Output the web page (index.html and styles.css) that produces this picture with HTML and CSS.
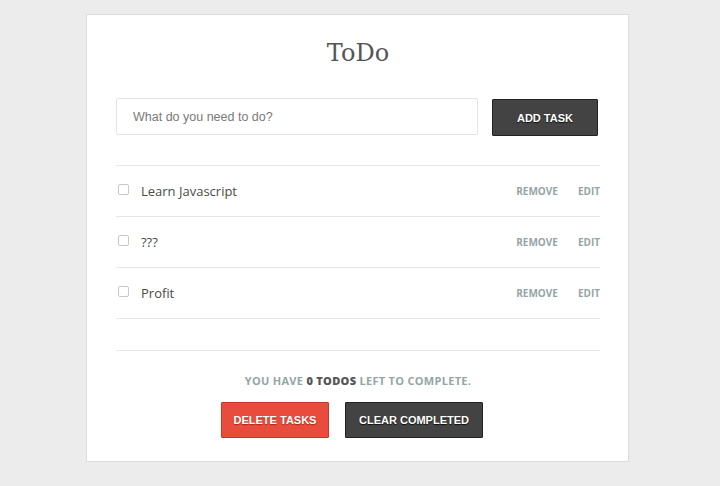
FILE: index.html
```html
<!DOCTYPE html>
<html>
<head>
<meta charset="utf-8">
<link rel="stylesheet" href="styles.css">
</head>
<body>
<div class="card">
  <h1 class="title">ToDo</h1>
  <form class="add-form">
    <input class="add-input" type="text" placeholder="What do you need to do?">
    <button class="btn btn-dark add-btn" type="button">ADD TASK</button>
  </form>
  <ul class="list">
    <li class="item">
      <span class="check"></span>
      <span class="label">Learn Javascript</span>
      <span class="actions"><a class="act">REMOVE</a><a class="act">EDIT</a></span>
    </li>
    <li class="item">
      <span class="check"></span>
      <span class="label">???</span>
      <span class="actions"><a class="act">REMOVE</a><a class="act">EDIT</a></span>
    </li>
    <li class="item">
      <span class="check"></span>
      <span class="label">Profit</span>
      <span class="actions"><a class="act">REMOVE</a><a class="act">EDIT</a></span>
    </li>
  </ul>
  <div class="footer">
    <p class="count">YOU HAVE <strong>0 TODOS</strong> LEFT TO COMPLETE.</p>
    <div class="footer-btns">
      <button class="btn btn-red" type="button">DELETE TASKS</button>
      <button class="btn btn-dark" type="button">CLEAR COMPLETED</button>
    </div>
  </div>
</div>
</body>
</html>
```
FILE: styles.css
```css
html, body {
  margin: 0;
  padding: 0;
  background: #ececec;
}
body {
  padding-top: 14px;
  font-family: "Open Sans", "Liberation Sans", sans-serif;
}
.card {
  margin-left: 86px;
  width: 484px;
  background: #fff;
  border: 1px solid #dcdcdc;
  padding: 23px 28px 23px 29px;
}
.title {
  margin: 0;
  font-family: "DejaVu Serif", serif;
  font-weight: normal;
  font-size: 24px;
  line-height: 30px;
  color: #555;
  text-align: center;
}
.add-form {
  display: flex;
  gap: 14px;
  margin-top: 30px;
}
.add-input {
  box-sizing: border-box;
  width: 362px;
  height: 37px;
  border: 1px solid #e3e3e3;
  border-radius: 2px;
  padding: 0 16px;
  font-family: "Liberation Sans", sans-serif;
  font-size: 12.5px;
  color: #555;
  outline: none;
}
.add-input::placeholder {
  color: #7a7a7a;
}
.btn {
  box-sizing: border-box;
  height: 36px;
  border-radius: 1px;
  font-family: "Liberation Sans", sans-serif;
  font-weight: bold;
  font-size: 11px;
  white-space: nowrap;
  color: #fff;
  text-shadow: 0 1px 1px rgba(0,0,0,0.8);
  padding: 0;
}
.btn-dark {
  background: #434343;
  border: 1px solid #222;
}
.btn-red {
  background: #e74c3c;
  border: 1px solid #c9372a;
  text-shadow: 0 1px 1px rgba(120,20,10,0.6);
}
.add-btn {
  width: 106px;
  height: 37px;
  margin-top: 1px;
}
.list {
  list-style: none;
  margin: 29px 0 0;
  padding: 0;
  border-top: 1px solid #e6e6e6;
}
.item {
  display: flex;
  align-items: center;
  box-sizing: border-box;
  height: 51px;
  padding-bottom: 1px;
  border-bottom: 1px solid #e6e6e6;
}
.check {
  box-sizing: border-box;
  width: 11px;
  height: 11px;
  border: 1px solid #c8c8c8;
  border-radius: 2px;
  margin-left: 2px;
  margin-right: 12px;
  margin-top: -3px;
}
.label {
  flex: 1;
  font-size: 13px;
  font-weight: 400;
  color: #4a4a4a;
}
.actions {
  display: flex;
  gap: 20px;
}
.act {
  font-size: 10px;
  font-weight: 700;
  color: #95a5a6;
}
.footer {
  margin-top: 31px;
  border-top: 1px solid #e6e6e6;
  padding-top: 22px;
  text-align: center;
}
.count {
  margin: 0;
  font-size: 11px;
  font-weight: 700;
  line-height: 16px;
  letter-spacing: 0.3px;
  color: #95a5a6;
}
.count strong {
  color: #555;
}
.footer-btns {
  display: flex;
  justify-content: center;
  gap: 16px;
  margin-top: 13px;
  padding-right: 12px;
}
.footer-btns .btn-red {
  width: 108px;
}
.footer-btns .btn-dark {
  width: 138px;
}
```
